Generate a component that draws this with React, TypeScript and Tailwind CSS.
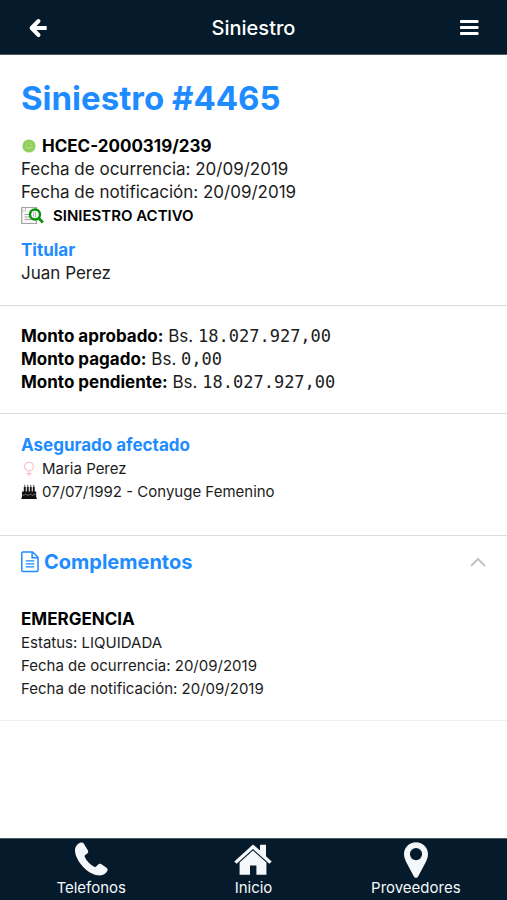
import { useState } from 'react';
import type { ReactNode } from 'react';

const claim = {
  number: '4465',
  policy: 'HCEC-2000319/239',
  occurred: '20/09/2019',
  notified: '20/09/2019',
  holder: 'Juan Perez',
  insured: 'Maria Perez',
  insuredInfo: '07/07/1992 - Conyuge Femenino',
};

const amounts = [
  { label: 'Monto aprobado:', value: '18.027.927,00' },
  { label: 'Monto pagado:', value: '0,00' },
  { label: 'Monto pendiente:', value: '18.027.927,00' },
];

const complements = [
  { name: 'EMERGENCIA', status: 'LIQUIDADA', occurred: '20/09/2019', notified: '20/09/2019' },
];

function ArrowLeftIcon() {
  return (
    <svg width="20" height="20" viewBox="0 0 20 20" fill="none" stroke="currentColor" strokeWidth="4" strokeLinejoin="round" aria-hidden="true">
      <path d="M10.500 3 3.600 10l6.900 7" strokeLinecap="round" />
      <path d="M4.500 10H18.700" />
    </svg>
  );
}

function MenuIcon() {
  return (
    <svg width="20" height="18" viewBox="0 0 20 18" fill="currentColor" aria-hidden="true">
      <rect x="1" y="1" width="18.5" height="3" rx="0.8" />
      <rect x="1" y="7" width="18.5" height="3" rx="0.8" />
      <rect x="1" y="13" width="18.5" height="3" rx="0.8" />
    </svg>
  );
}

function SmileIcon() {
  return (
    <svg width="16" height="16" viewBox="0 0 16 16" aria-hidden="true">
      <circle cx="8" cy="7" r="6.6" fill="#92cf5c" />
      <circle cx="5.8" cy="5.2" r="0.8" fill="#b5e08a" />
      <circle cx="10.2" cy="5.2" r="0.8" fill="#b5e08a" />
      <path d="M4.500 7.600q3.500 3.200 7 0" fill="none" stroke="#b5e08a" strokeWidth="1.1" />
    </svg>
  );
}

function SearchDocIcon() {
  return (
    <svg width="24" height="20" viewBox="0 0 24 20" fill="none" aria-hidden="true">
      <path d="M.7 1.500H15.500V17.500H.7Z" fill="#f7f7f7" stroke="#a3a3a3" strokeWidth="1.2" />
      <path d="M4.500 1.500v3.500H.7" stroke="#c4c4c4" />
      <path d="M3.500 8.500H9M3.500 11H9M3.500 13.500h7" stroke="#a3a3a3" />
      <circle cx="14" cy="8.5" r="5" fill="#ffffff" stroke="#0a930a" strokeWidth="2.4" />
      <path d="M12.500 6v5M14.500 6v5" stroke="#b5b5b5" />
      <path d="m17.500 12 4.400 4.500" stroke="#0a930a" strokeWidth="2.8" />
    </svg>
  );
}

function FemaleIcon() {
  return (
    <svg width="16" height="16" viewBox="0 0 16 16" fill="none" stroke="#ffb9c6" strokeWidth="1.1" aria-hidden="true">
      <circle cx="8" cy="5.6" r="4.4" />
      <path d="M8 10v5M5.500 12.600h5" />
    </svg>
  );
}

function CakeIcon() {
  return (
    <svg width="16" height="16" viewBox="0 0 16 16" aria-hidden="true">
      <path
        d="M2.800 3h1.900v5H2.800zM5.800 3h1.900v5H5.800zM8.800 3h1.900v5H8.800zM11.800 3h1.900v5H11.800zM3.800.400l.8 2H3zM6.800.400l.8 2H6zM9.800.400l.8 2H9zM12.800.400l.8 2H12zM1 7.600h14.200v5.800H1zM.4 13.600h15.400V15H.4z"
        fill="#111111"
      />
      <path d="M1 10.800q1.200 1.200 2.400 0t2.400 0 2.400 0 2.400 0 2.400 0 2.200 0" fill="none" stroke="#b0b0b0" strokeWidth="0.6" />
    </svg>
  );
}

function DocumentIcon() {
  return (
    <svg width="18" height="22" viewBox="0 0 18 22" fill="none" stroke="currentColor" strokeWidth="1.5" aria-hidden="true">
      <path d="M1.800 1h9.900l5.300 5.300v13.200q0 1-1 1H1.800q-1 0-1-1V2q0-1 1-1Z" strokeLinejoin="round" />
      <path d="M11.100 1.200v5.600h5.700" />
      <path d="M4.700 9.900h8.600M4.700 12.900h8.600M4.700 15.900h8.600" strokeWidth="1.3" />
    </svg>
  );
}

function ChevronIcon({ open }: { open: boolean }) {
  return (
    <svg
      width="16"
      height="10"
      viewBox="0 0 16 10"
      fill="none"
      stroke="#c4c4c4"
      strokeWidth="2"
      className={open ? '' : 'rotate-180'}
      aria-hidden="true"
    >
      <path d="m1 9 7-7 7 7" />
    </svg>
  );
}

function PhoneIcon() {
  return (
    <svg width="34" height="36" viewBox="0 0 34 36" fill="currentColor" aria-hidden="true">
      <path d="M6.2.8C3.4 1.8 1 4.8 1 8.4 1 13 4 19.2 9.2 24.9c5.4 5.6 11.300 8.500 16.600 8.500 3.700 0 6.500-1.900 7.600-4.600.5-1.300.1-2.300-.9-3.100l-5.400-3.600c-1.100-.7-2-.5-2.900.4l-2 2.100c-.6.6-1.200.6-2 .2-1.900-1-3.800-2.500-5.600-4.400-1.800-1.900-3-3.700-3.800-5.500-.3-.8-.3-1.400.4-1.900l2.100-1.600c1-.8 1.200-1.800.6-2.900L9.900 1.800C9 .5 7.800.2 6.200.8Z" />
    </svg>
  );
}

function HomeIcon() {
  return (
    <svg width="38" height="36" viewBox="0 0 38 36" fill="currentColor" aria-hidden="true">
      <path d="M19 2.500 26 8.600V2.800h6v11.400l5.700 5.200-2.300 2.400L19 7.100 2.600 21.800.3 19.400Z" />
      <path d="M19 8.600 32.400 20.600V32.700h-10v-9.200h-6.400v9.200H5.600V20.600Z" />
    </svg>
  );
}

function PinIcon() {
  return (
    <svg width="26" height="36" viewBox="0 0 26 36" fill="currentColor" aria-hidden="true">
      <path
        fillRule="evenodd"
        d="M13 .3C6.300.3 1 5.500 1 12.100c0 3.400 1.300 6.300 3.100 9.700L10.900 34.500c.9 1.700 3.300 1.700 4.200 0l6.800-12.700c1.800-3.400 3.100-6.300 3.100-9.700C25 5.500 19.700.3 13 .3Zm0 5.700a6.100 6.100 0 1 1 0 12.200 6.100 6.100 0 0 1 0-12.200Z"
      />
    </svg>
  );
}

function NavItem({ label, icon }: { label: string; icon: ReactNode }) {
  return (
    <a href="#" className="flex flex-1 flex-col items-center pt-[3px] text-[#f5f8fa]">
      {icon}
      <span className="text-[15px] leading-5">{label}</span>
    </a>
  );
}

export default function App() {
  const [open, setOpen] = useState(true);

  return (
    <div className="flex min-h-screen flex-col bg-white font-['Inter',sans-serif] text-[17px] leading-[23px] text-[#1c1c1c]">
      {/* Header */}
      <header className="grid h-[55px] grid-cols-[1fr_auto_1fr] items-center border-b border-[#4b5963] bg-[#051b2b] px-7 pt-0.5 text-white">
        <button type="button" aria-label="Volver" className="justify-self-start">
          <ArrowLeftIcon />
        </button>
        <span className="text-xl font-medium">Siniestro</span>
        <button type="button" aria-label="Menu" className="justify-self-end">
          <MenuIcon />
        </button>
      </header>

      <main className="flex-1">
        {/* Claim */}
        <section className="border-b border-[#dcdcdc] px-[21px] pt-[23px] pb-5">
          <h1 className="mb-[17px] text-[33px] leading-10 font-bold text-[#1e8cff]">Siniestro #{claim.number}</h1>
          <div className="flex items-center gap-[5px] font-bold text-black">
            <SmileIcon />
            {claim.policy}
          </div>
          <p>Fecha de ocurrencia: {claim.occurred}</p>
          <p>Fecha de notificación: {claim.notified}</p>
          <div className="flex items-center gap-2 text-[15px] leading-[23px] font-semibold text-black">
            <SearchDocIcon />
            SINIESTRO ACTIVO
          </div>
          <h2 className="mt-3 font-bold text-[#1e8cff]">Titular</h2>
          <p>{claim.holder}</p>
        </section>

        {/* Amounts */}
        <section className="border-b border-[#dcdcdc] px-[21px] py-[19px]">
          {amounts.map((amount) => (
            <p key={amount.label}>
              <strong className="font-bold text-black">{amount.label}</strong> Bs.{' '}
              <span className="font-['DejaVu_Sans_Mono',monospace] leading-5">{amount.value}</span>
            </p>
          ))}
        </section>

        {/* Insured */}
        <section className="border-b border-[#dcdcdc] px-[21px] pt-5 pb-8">
          <h2 className="font-bold text-[#1e8cff]">Asegurado afectado</h2>
          <div className="flex items-center gap-[5px] text-[15px] leading-[23px]">
            <FemaleIcon />
            {claim.insured}
          </div>
          <div className="flex items-center gap-[5px] text-[15px] leading-[23px]">
            <CakeIcon />
            {claim.insuredInfo}
          </div>
        </section>

        {/* Complements */}
        <button
          type="button"
          aria-expanded={open}
          onClick={() => setOpen(!open)}
          className="flex h-[52px] w-full items-center justify-between px-[21px] text-[#1e8cff]"
        >
          <span className="flex items-center gap-[5px] text-xl font-bold">
            <DocumentIcon />
            Complementos
          </span>
          <ChevronIcon open={open} />
        </button>
        {open &&
          complements.map((item) => (
            <article key={item.name} className="border-b border-[#efefef] px-[21px] py-5 text-[15px] leading-[23px]">
              <h3 className="text-[17px] leading-[23px] font-bold text-black">{item.name}</h3>
              <p>Estatus: {item.status}</p>
              <p>Fecha de ocurrencia: {item.occurred}</p>
              <p>Fecha de notificación: {item.notified}</p>
            </article>
          ))}
      </main>

      {/* Bottom navigation */}
      <nav className="flex h-[62px] border-t border-[#4b5963] bg-[#051b2b] px-2.5">
        <NavItem label="Telefonos" icon={<PhoneIcon />} />
        <NavItem label="Inicio" icon={<HomeIcon />} />
        <NavItem label="Proveedores" icon={<PinIcon />} />
      </nav>
    </div>
  );
}
